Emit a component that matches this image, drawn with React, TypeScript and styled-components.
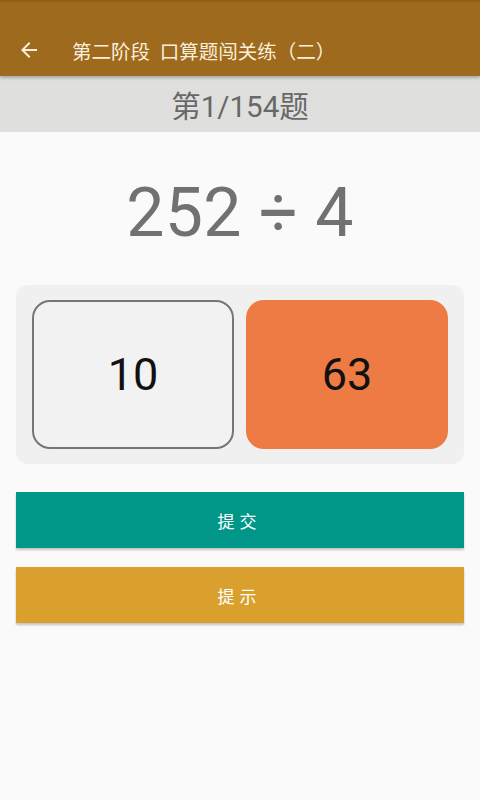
import React from "react";
import styled, { createGlobalStyle } from "styled-components";

const Global = createGlobalStyle`
  html, body { margin: 0; padding: 0; }
  body {
    background: #fafafa;
    font-family: Roboto, "Noto Sans CJK SC", "Noto Sans", sans-serif;
  }
  * { box-sizing: border-box; }
`;

const Page = styled.div`
  width: 480px;
  height: 800px;
  background: #fafafa;
  display: flex;
  flex-direction: column;
  overflow: hidden;
`;

const AppBar = styled.header`
  height: 76px;
  background: #9d6a1e;
  border-top: 2px solid #8e5f19;
  display: flex;
  align-items: center;
  padding: 22px 0 0 17px;
  box-shadow: 0 2px 3px rgba(0, 0, 0, 0.25);
  position: relative;
  z-index: 2;
`;

const BackButton = styled.div`
  width: 24px;
  height: 24px;
  display: flex;
  align-items: center;
  justify-content: center;
  margin-right: 31px;
`;

const Title = styled.h1`
  margin: 0;
  font-size: 19.5px;
  font-weight: 400;
  color: #fbeeda;
  white-space: pre;
  font-family: Roboto, "Noto Sans CJK SC", sans-serif;
`;

const SubHeader = styled.div`
  height: 56px;
  background: #dfdfdd;
  display: flex;
  align-items: center;
  justify-content: center;
  font-size: 29.5px;
  color: #686868;
  font-family: Roboto, "Noto Sans CJK SC", sans-serif;
`;

const Equation = styled.div`
  height: 153px;
  display: flex;
  align-items: center;
  justify-content: center;
  font-size: 68px;
  color: #717171;
  font-family: Roboto, "Noto Sans CJK SC", sans-serif;
  letter-spacing: 0.3px;
  padding-top: 8px;
`;

const OptionsPanel = styled.div`
  margin: 0 16px;
  background: #f0f0f0;
  border-radius: 12px;
  padding: 15px 16px;
  display: grid;
  grid-template-columns: 1fr 1fr;
  gap: 12px;
`;

const Option = styled.div<{ $selected?: boolean }>`
  height: 149px;
  border-radius: 18px;
  display: flex;
  align-items: center;
  justify-content: center;
  font-size: 45px;
  color: #111;
  background: ${(p) => (p.$selected ? "#ef7b44" : "#f2f2f2")};
  border: ${(p) => (p.$selected ? "none" : "2px solid #767676")};
  font-family: Roboto, sans-serif;
`;

const Actions = styled.div`
  display: flex;
  flex-direction: column;
  gap: 19px;
  margin: 28px 16px 0;
`;

const ActionButton = styled.button<{ $color: string }>`
  height: 56px;
  border: none;
  background: ${(p) => p.$color};
  color: #ffffff;
  font-size: 17px;
  letter-spacing: 5px;
  padding-left: 5px;
  font-family: Roboto, "Noto Sans CJK SC", sans-serif;
  box-shadow: 0 2px 2px rgba(0, 0, 0, 0.22);
  display: flex;
  align-items: center;
  justify-content: center;
`;

export default function App() {
  return (
    <>
      <Global />
      <Page>
        <AppBar>
          <BackButton>
            <svg width="24" height="24" viewBox="0 0 24 24">
              <path
                d="M20 11H7.83l5.59-5.59L12 4l-8 8 8 8 1.41-1.41L7.83 13H20v-2z"
                fill="#fbeeda"
              />
            </svg>
          </BackButton>
          <Title>{"第二阶段  口算题闯关练（二）"}</Title>
        </AppBar>
        <SubHeader>第1/154题</SubHeader>
        <Equation>252 ÷ 4</Equation>
        <OptionsPanel>
          <Option>10</Option>
          <Option $selected>63</Option>
        </OptionsPanel>
        <Actions>
          <ActionButton $color="#009788">提交</ActionButton>
          <ActionButton $color="#d9a02d">提示</ActionButton>
        </Actions>
      </Page>
    </>
  );
}
